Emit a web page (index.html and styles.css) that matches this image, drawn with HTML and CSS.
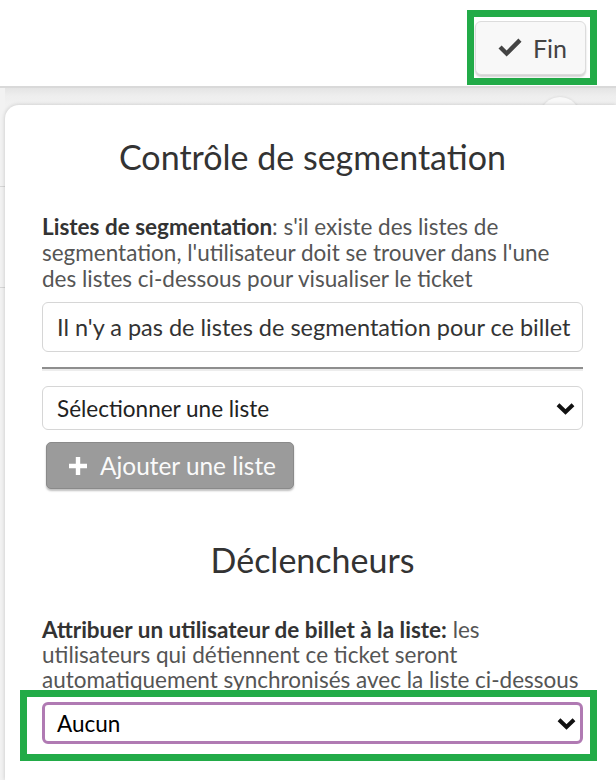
FILE: index.html
```html
<!DOCTYPE html>
<html lang="fr">
<head>
<meta charset="utf-8">
<title>Contrôle de segmentation</title>
<link rel="stylesheet" href="styles.css">
</head>
<body>
<header class="topbar">
  <div class="highlight highlight-top">
    <button class="btn-fin" type="button">
      <svg class="ico-check" width="26" height="20" viewBox="0 0 26 20" aria-hidden="true">
        <path d="M1.5 10.5 L4.6 7.4 L9.6 12.4 L21.4 0.6 L24.5 3.7 L9.6 18.6 Z" fill="#444"/>
      </svg>
      <span>Fin</span>
    </button>
  </div>
</header>
<main class="stage">
  <div class="strip">
    <div class="strip-row"></div>
    <div class="strip-row"></div>
  </div>
  <div class="bg-circle"></div>
  <section class="panel">
    <h1 class="title">Contrôle de segmentation</h1>
    <p class="desc"><strong>Listes de segmentation</strong>: s'il existe des listes de segmentation, l'utilisateur doit se trouver dans l'une des listes ci-dessous pour visualiser le ticket</p>
    <div class="field field-input">Il n'y a pas de listes de segmentation pour ce billet</div>
    <div class="rule"></div>
    <div class="field field-select">
      <span>Sélectionner une liste</span>
      <svg class="chev" width="19" height="13" viewBox="0 0 19 13" aria-hidden="true"><path d="M2 2.8 L9.5 10 L17 2.8" fill="none" stroke="#111" stroke-width="4"/></svg>
    </div>
    <button class="btn-add" type="button">
      <svg width="22" height="22" viewBox="0 0 22 22" aria-hidden="true"><path d="M11 2 V20 M2 11 H20" stroke="#fff" stroke-width="4.4"/></svg>
      <span>Ajouter une liste</span>
    </button>
    <h2 class="title title-2">Déclencheurs</h2>
    <p class="desc desc-2"><strong>Attribuer un utilisateur de billet à la liste:</strong> les utilisateurs qui détiennent ce ticket seront automatiquement synchronisés avec la liste ci-dessous</p>
    <div class="highlight highlight-bottom">
      <div class="field field-select field-active">
        <span>Aucun</span>
        <svg class="chev" width="19" height="13" viewBox="0 0 19 13" aria-hidden="true"><path d="M2 2.8 L9.5 10 L17 2.8" fill="none" stroke="#111" stroke-width="4"/></svg>
      </div>
    </div>
  </section>
</main>
</body>
</html>
```
FILE: styles.css
```css
* { box-sizing: border-box; }
html, body { margin: 0; padding: 0; }
body {
  width: 616px;
  height: 780px;
  overflow: hidden;
  font-family: Lato, "Open Sans", sans-serif;
  color: #333;
  background: #efefef;
}
.topbar {
  height: 88px;
  background: #fff;
  border-bottom: 2px solid #d9d9d9;
  display: flex;
  justify-content: flex-end;
  align-items: flex-start;
  padding: 10px 19px 0 0;
}
.highlight {
  border: 7px solid #22ab48;
}
.highlight-top {
  padding: 4px 4px 3px 1px;
}
.btn-fin {
  width: 111px;
  height: 54px;
  display: flex;
  align-items: center;
  gap: 10px;
  padding: 0 0 0 21px;
  background: #f8f8f8;
  border: 1px solid #dcdcdc;
  border-radius: 6px;
  box-shadow: 0 2px 2px rgba(0,0,0,0.18);
  font-family: Lato, sans-serif;
  font-size: 25px;
  color: #444;
}
.ico-check { display: block; }
.stage {
  position: relative;
  display: flex;
  height: 692px;
  padding-top: 17px;
  background: linear-gradient(#e4e4e4 0, #eeeeee 8px, #f1f1f1 17px);
}
.strip {
  width: 5px;
  margin-top: -17px;
  background: #f2f2f2;
}
.strip-row {
  height: 101px;
  border-bottom: 1px solid #d6d6d6;
}
.strip-row:first-child { height: 99px; }
.bg-circle {
  position: absolute;
  left: 540px;
  top: 9px;
  width: 40px;
  height: 40px;
  border-radius: 50%;
  background: #f8f8f8;
  box-shadow: 0 0 3px rgba(0,0,0,0.12);
}
.panel {
  position: relative;
  flex: 0 0 611px;
  background: #fff;
  border-radius: 14px 0 0 0;
  box-shadow: 0 0 4px rgba(0,0,0,0.18);
  padding: 34px 33px 0 37px;
}
.title {
  margin: 0;
  font-size: 34px;
  line-height: 36px;
  font-weight: 400;
  text-align: center;
  color: #333;
}
.title-2 { margin-top: 53px; }
.desc {
  margin: 39px 0 0;
  font-size: 22.5px;
  line-height: 26px;
  color: #555;
}
.desc strong { color: #333; font-weight: 700; }
.desc-2 { line-height: 25px; margin-top: 39px; }
.field {
  display: flex;
  align-items: center;
  border: 1px solid #d6d6d6;
  border-radius: 6px;
  background: #fff;
  font-size: 23.5px;
}
.field-input {
  margin-top: 10px;
  height: 50px;
  padding: 0 10px 0 14px;
  color: #333;
  white-space: nowrap;
  overflow: hidden;
}
.rule {
  margin-top: 15px;
  height: 4px;
  border-top: 2px solid #8e8e8e;
  border-bottom: 2px solid #ededed;
}
.field-select {
  margin-top: 15px;
  height: 44px;
  padding: 0 7px 0 14px;
  justify-content: space-between;
  color: #222;
  font-size: 22.5px;
}
.chev { display: block; }
.btn-add {
  margin: 12px 0 0 4px;
  width: 248px;
  height: 47px;
  display: flex;
  align-items: center;
  gap: 11px;
  padding: 0 0 0 20px;
  background: #9b9b9b;
  border: 1px solid #8a8a8a;
  border-radius: 5px;
  box-shadow: 0 2px 2px rgba(0,0,0,0.25);
  font-family: Lato, sans-serif;
  font-size: 24.4px;
  color: #fafafa;
}
.btn-add svg { display: block; }
.highlight-bottom {
  position: relative;
  margin: -2px -14px 0 -22px;
  padding: 5px 7px 10px 15px;
}
.field-active {
  margin-top: 0;
  height: 42px;
  border: 3px solid #b07ab3;
  color: #000;
  padding: 0 4px 0 12px;
}
```
